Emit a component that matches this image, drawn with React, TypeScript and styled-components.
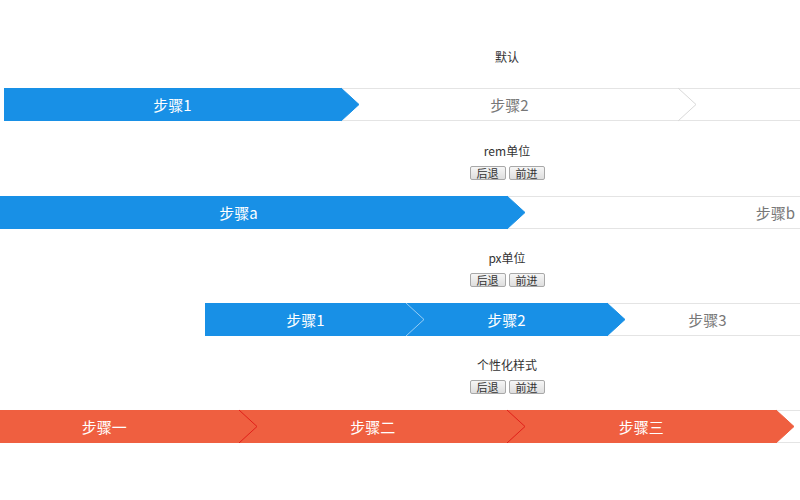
import React from "react";
import styled, { createGlobalStyle } from "styled-components";

const Global = createGlobalStyle`
  html, body { margin: 0; padding: 0; background: #ffffff; overflow: hidden; }
  body { font-family: "Noto Sans CJK SC", "Noto Sans", sans-serif; }
`;

const Page = styled.div`
  width: 1014px;
  padding-top: 49px;
  display: flex;
  flex-direction: column;
`;

const Title = styled.div<{ $gap: number }>`
  margin-top: ${(p) => p.$gap}px;
  height: 16px;
  line-height: 16px;
  text-align: center;
  font-size: 12px;
  color: #333;
`;

const Controls = styled.div`
  margin-top: 7px;
  display: flex;
  justify-content: center;
  gap: 3px;
`;

const Btn = styled.button`
  width: 36px;
  height: 14px;
  padding: 0;
  box-sizing: border-box;
  border: 1px solid #a8a8a8;
  border-radius: 2px;
  background: linear-gradient(#f6f6f6, #dedede);
  font-family: "Noto Sans CJK SC", sans-serif;
  font-size: 11px;
  line-height: 12px;
  color: #333;
`;

const Bar = styled.div<{ $left: number; $width: number; $gap: number }>`
  margin-top: ${(p) => p.$gap}px;
  margin-left: ${(p) => p.$left}px;
  width: ${(p) => p.$width}px;
  height: 33px;
  display: flex;
`;

const Step = styled.div<{ $bg: string; $fg: string; $border: string }>`
  position: relative;
  flex: 1 1 0;
  box-sizing: border-box;
  height: 33px;
  border-top: 1px solid ${(p) => p.$border};
  border-bottom: 1px solid ${(p) => p.$border};
  background: ${(p) => p.$bg};
  color: ${(p) => p.$fg};
  display: flex;
  align-items: center;
  justify-content: center;
  font-size: 15px;
`;

const Arrow = styled.svg`
  position: absolute;
  left: 100%;
  top: -1px;
  width: 19px;
  height: 33px;
  z-index: 2;
  overflow: visible;
`;

type Theme = {
  active: string;
  activeText: string;
  activeSep: string;
  idle: string;
  idleText: string;
  idleSep: string;
  idleBorder: string;
};

const blue: Theme = {
  active: "#1890e6",
  activeText: "#ffffff",
  activeSep: "rgba(255,255,255,0.55)",
  idle: "#ffffff",
  idleText: "#777777",
  idleSep: "#d9d9d9",
  idleBorder: "#e4e4e4",
};

const orange: Theme = {
  active: "#ef5f40",
  activeText: "#ffffff",
  activeSep: "#e0201a",
  idle: "#ffffff",
  idleText: "#777777",
  idleSep: "#d9d9d9",
  idleBorder: "#e4e4e4",
};

function Steps({
  labels,
  current,
  theme,
  left,
  width,
  gap,
}: {
  labels: string[];
  current: number;
  theme: Theme;
  left: number;
  width: number;
  gap: number;
}) {
  return (
    <Bar $left={left} $width={width} $gap={gap}>
      {labels.map((l, i) => {
        const on = i <= current;
        const nextOn = i + 1 <= current;
        const last = i === labels.length - 1;
        const fill = on ? theme.active : theme.idle;
        const stroke = on ? (nextOn ? theme.activeSep : theme.active) : theme.idleSep;
        return (
          <Step
            key={i}
            $bg={fill}
            $fg={on ? theme.activeText : theme.idleText}
            $border={on ? theme.active : theme.idleBorder}
          >
            {l}
            {!last && (
              <Arrow viewBox="0 0 19 33">
                <polygon points="0,0 18,16.5 0,33" fill={fill} />
                <polyline points="0,0 18,16.5 0,33" fill="none" stroke={stroke} strokeWidth="1" />
              </Arrow>
            )}
          </Step>
        );
      })}
    </Bar>
  );
}

function Buttons() {
  return (
    <Controls>
      <Btn>后退</Btn>
      <Btn>前进</Btn>
    </Controls>
  );
}

export default function App() {
  return (
    <>
      <Global />
      <Page>
        <Title $gap={0}>默认</Title>
        <Steps labels={["步骤1", "步骤2", ""]} current={0} theme={blue} left={4} width={1011} gap={23} />

        <Title $gap={22}>rem单位</Title>
        <Buttons />
        <Steps labels={["步骤a", "步骤b"]} current={0} theme={blue} left={-30} width={1074} gap={16} />

        <Title $gap={21}>px单位</Title>
        <Buttons />
        <Steps labels={["步骤1", "步骤2", "步骤3"]} current={1} theme={blue} left={205} width={603} gap={16} />

        <Title $gap={21}>个性化样式</Title>
        <Buttons />
        <Steps labels={["步骤一", "步骤二", "步骤三", ""]} current={2} theme={orange} left={-30} width={1074} gap={16} />
      </Page>
    </>
  );
}
